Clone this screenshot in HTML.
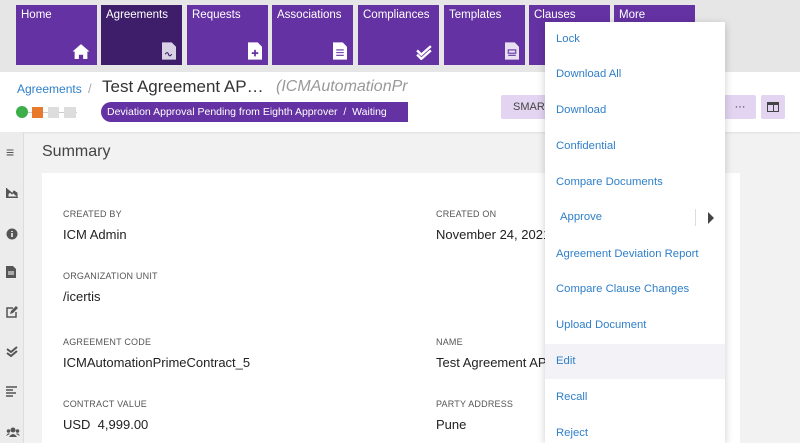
<!DOCTYPE html>
<html><head><style>
*{margin:0;padding:0;box-sizing:border-box}
body{width:800px;height:443px;overflow:hidden;font-family:"Liberation Sans",sans-serif;background:#f2f2f2;position:relative}
.top{position:absolute;left:0;top:0;width:800px;height:72px;background:#e6e6e6}
.tile{position:absolute;top:5px;width:81px;height:60px;background:#6432a2;color:#fff;font-size:11.5px;padding:4px 5px}
.tile.act{background:#3e1e6b}
.tile svg{position:absolute;right:6px;bottom:5px}
.hdr{position:absolute;left:0;top:72px;width:800px;height:60px;background:#fff;box-shadow:0 1px 2px rgba(0,0,0,.08)}
.side{position:absolute;left:0;top:132px;width:24px;height:311px;background:#ececec;border-right:1px solid #ddd}
.side div{position:absolute;left:6px;width:12px;height:12px;color:#555;font-size:12px}
.card{position:absolute;left:42px;top:173px;width:698px;height:270px;background:#fff}
.lbl{position:absolute;font-size:9px;color:#555;letter-spacing:.2px}
.val{position:absolute;font-size:13px;color:#222}
.menu{position:absolute;left:545px;top:22px;width:180px;height:421px;background:#fff;box-shadow:0 2px 8px rgba(0,0,0,.2)}
.mi{position:absolute;left:11px;font-size:11.3px;color:#2f7fc9}
</style></head><body>
<div class="top"></div>
<div class="tile" style="left:16px">Home<svg width="20" height="17" viewBox="0 0 18 16"><path d="M9 1L1 8h2v7h4v-4h4v4h4V8h2z" fill="#fff"/></svg></div>
<div class="tile act" style="left:101px">Agreements<svg width="14" height="18" viewBox="0 0 13 16"><path d="M0 0h9l4 4v12H0z" fill="#d8d0e4"/><path d="M3 11q2-3 3 0t3 0" stroke="#3e1e6b" fill="none"/></svg></div>
<div class="tile" style="left:187px">Requests<svg width="14" height="18" viewBox="0 0 13 16"><path d="M0 0h9l4 4v12H0z" fill="#fff"/><path d="M6.5 7v6M3.5 10h6" stroke="#6432a2" stroke-width="1.6"/></svg></div>
<div class="tile" style="left:272px">Associations<svg width="14" height="18" viewBox="0 0 13 16"><path d="M0 0h9l4 4v12H0z" fill="#fff"/><path d="M3 7h7M3 9.5h7M3 12h7" stroke="#6432a2"/></svg></div>
<div class="tile" style="left:358px">Compliances<svg width="17" height="15" viewBox="0 0 16 14"><path d="M1 5l4 4 9-8M1 9l4 4 9-8" stroke="#fff" stroke-width="2.2" fill="none"/></svg></div>
<div class="tile" style="left:444px">Templates<svg width="14" height="18" viewBox="0 0 13 16"><path d="M0 0h9l4 4v12H0z" fill="#e8e0f0"/><path d="M3 7h7v3H3zM3 12h7" stroke="#6432a2" fill="none"/></svg></div>
<div class="tile" style="left:529px">Clauses</div>
<div class="tile" style="left:614px">More</div>
<div class="hdr">
<div style="position:absolute;left:17px;top:10px;font-size:12px;color:#2f7fc9">Agreements</div>
<div style="position:absolute;left:88px;top:9px;font-size:13px;color:#aaa">/</div>
<div style="position:absolute;left:102px;top:5px;font-size:17px;color:#333">Test Agreement AP…</div>
<div style="position:absolute;left:276px;top:6px;font-size:16px;color:#999;font-style:italic;width:132px;overflow:hidden;white-space:nowrap">(ICMAutomationPrime</div>
<div style="position:absolute;left:17px;top:40px;width:60px;height:1px;background:#ccc"></div>
<div style="position:absolute;left:16px;top:34px;width:12px;height:12px;border-radius:50%;background:#3cae4a"></div>
<div style="position:absolute;left:32px;top:35px;width:11px;height:11px;background:#e87a2d"></div>
<div style="position:absolute;left:48px;top:35px;width:11px;height:11px;background:#ddd"></div>
<div style="position:absolute;left:64px;top:35px;width:12px;height:11px;background:#ddd"></div>
<div style="position:absolute;left:101px;top:30px;width:307px;height:20px;background:#6432a2;border-radius:10px 0 0 10px;color:#fff;font-size:10.5px;padding:4px 0 0 6px;white-space:nowrap;overflow:hidden">Deviation Approval Pending from Eighth Approver &nbsp;/&nbsp; Waiting</div>
<div style="position:absolute;left:501px;top:23px;width:50px;height:24px;background:#e3d5f1;border-radius:2px;font-size:11px;color:#444;padding:6px 0 0 12px;overflow:hidden">SMART</div>
<div style="position:absolute;left:724px;top:23px;width:32px;height:24px;background:#e3d5f1;border-radius:2px;font-size:11px;color:#333;text-align:center;line-height:24px">···</div>
<div style="position:absolute;left:761px;top:23px;width:24px;height:24px;background:#e3d5f1;border-radius:2px"><div style="position:absolute;left:6px;top:7px;width:12px;height:10px;border:1.5px solid #444;border-top-width:3px"></div><div style="position:absolute;left:11.5px;top:8px;width:1.5px;height:8px;background:#444"></div></div>
</div>
<div class="side">
<div style="top:14px;left:6px;font-size:14px;line-height:12px">≡</div>
<div style="top:55px"><svg width="12" height="10"><path d="M0.5 0v9.5H12M2 9V6l2-2 2 2 2-3 3 2v4z" stroke="#555" fill="#555"/></svg></div>
<div style="top:96px"><svg width="12" height="12"><circle cx="6" cy="6" r="5.5" fill="#555"/><path d="M6 5v4M6 3v1" stroke="#fff" stroke-width="1.5"/></svg></div>
<div style="top:134px"><svg width="10" height="12"><path d="M0 0h7l3 3v9H0z" fill="#555"/><path d="M2 6h6M2 8h6" stroke="#fff"/></svg></div>
<div style="top:174px"><svg width="12" height="12"><path d="M7 2H1v9h9V6" stroke="#555" stroke-width="1.5" fill="none"/><path d="M4 8l1-3 5-5 2 2-5 5z" fill="#555"/></svg></div>
<div style="top:214px"><svg width="12" height="11"><path d="M1 3l4 3 6-5M1 7l4 3 6-5" stroke="#555" stroke-width="2" fill="none"/></svg></div>
<div style="top:254px"><svg width="11" height="11"><path d="M0 1h11M0 4h7M0 7h10M0 10h7" stroke="#555" stroke-width="1.4"/></svg></div>
<div style="top:294px"><svg width="14" height="10"><circle cx="7" cy="3" r="2.5" fill="#555"/><circle cx="2.5" cy="4" r="1.8" fill="#555"/><circle cx="11.5" cy="4" r="1.8" fill="#555"/><path d="M3 10q4-6 8 0z M0 9q2-4 4-2zM14 9q-2-4-4-2z" fill="#555"/></svg></div>
</div>
<div style="position:absolute;left:42px;top:143px;font-size:16px;color:#444">Summary</div>
<div class="card">
<div class="lbl" style="left:21px;top:36px">CREATED BY</div>
<div class="val" style="left:21px;top:54px">ICM Admin</div>
<div class="lbl" style="left:21px;top:98px">ORGANIZATION UNIT</div>
<div class="val" style="left:21px;top:116px">/icertis</div>
<div class="lbl" style="left:21px;top:164px">AGREEMENT CODE</div>
<div class="val" style="left:21px;top:182px">ICMAutomationPrimeContract_5</div>
<div class="lbl" style="left:21px;top:226px">CONTRACT VALUE</div>
<div class="val" style="left:21px;top:244px">USD &nbsp;4,999.00</div>
<div class="lbl" style="left:394px;top:36px">CREATED ON</div>
<div class="val" style="left:394px;top:54px">November 24, 2021</div>
<div class="lbl" style="left:394px;top:164px">NAME</div>
<div class="val" style="left:394px;top:182px;white-space:nowrap">Test Agreement AP</div>
<div class="lbl" style="left:394px;top:226px">PARTY ADDRESS</div>
<div class="val" style="left:394px;top:244px">Pune</div>
</div>
<div class="menu">
<div style="position:absolute;left:0;top:322px;width:180px;height:35px;background:#f3f2f7"></div>
<div class="mi" style="top:11px">Lock</div>
<div class="mi" style="top:46px">Download All</div>
<div class="mi" style="top:82px">Download</div>
<div class="mi" style="top:118px">Confidential</div>
<div class="mi" style="top:154px">Compare Documents</div>
<div class="mi" style="top:189px;left:15px">Approve</div>
<div style="position:absolute;left:150px;top:187px;width:1px;height:17px;background:#ddd"></div>
<div style="position:absolute;left:163px;top:190px;width:0;height:0;border-left:6px solid #444;border-top:6px solid transparent;border-bottom:6px solid transparent"></div>
<div class="mi" style="top:226px">Agreement Deviation Report</div>
<div class="mi" style="top:261px">Compare Clause Changes</div>
<div class="mi" style="top:297px">Upload Document</div>
<div class="mi" style="top:333px">Edit</div>
<div class="mi" style="top:369px">Recall</div>
<div class="mi" style="top:405px">Reject</div>
</div>
</body></html>
